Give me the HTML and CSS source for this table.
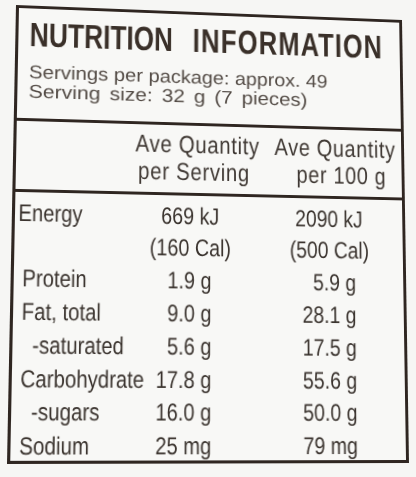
FILE: index.html
```html
<!DOCTYPE html>
<html>
<head>
    <title>Nutrition Information</title>
    <link rel="stylesheet" href="styles.css">
</head>
<body>
    <div class="label">
        <!-- Title and serving info -->
        <div class="head">
            <h1 class="title">NUTRITION <span class="wide">INFORMATION</span></h1>
            <p class="serve per-pack">Servings per package: approx. 49</p>
            <p class="serve size">Serving size: 32 g (7 pieces)</p>
        </div>

        <!-- Column headings -->
        <div class="cols">
            <div></div>
            <div class="col-head">Ave Quantity<br>per Serving</div>
            <div class="col-head">Ave Quantity<br>per 100 g</div>
        </div>

        <!-- Nutrient rows -->
        <div class="rows">
            <div class="name first">Energy</div>
            <div class="v2 mid">669 kJ</div>
            <div class="v3 mid">2090 kJ</div>

            <div class="name"></div>
            <div class="v2 mid">(160 Cal)</div>
            <div class="v3 mid">(500 Cal)</div>

            <div class="name">Protein</div>
            <div class="v2">1.9 g</div>
            <div class="v3">5.9 g</div>

            <div class="name">Fat, total</div>
            <div class="v2">9.0 g</div>
            <div class="v3">28.1 g</div>

            <div class="name sub">-saturated</div>
            <div class="v2">5.6 g</div>
            <div class="v3">17.5 g</div>

            <div class="name">Carbohydrate</div>
            <div class="v2">17.8 g</div>
            <div class="v3">55.6 g</div>

            <div class="name sub">-sugars</div>
            <div class="v2">16.0 g</div>
            <div class="v3">50.0 g</div>

            <div class="name">Sodium</div>
            <div class="v2">25 mg</div>
            <div class="v3">79 mg</div>
        </div>
    </div>
</body>
</html>
```

FILE: styles.css
```css
html, body { margin: 0; padding: 0; }
body {
    background: #f6f6f4;
    width: 416px;
    height: 477px;
    overflow: hidden;
    color: #3b332d;
    font-family: "Liberation Sans", Arial, sans-serif;
}

/* the label is photographed at a slight angle */
.label {
    width: 394px;
    height: 458px;
    box-sizing: border-box;
    border: 3px solid #2f2621;
    background: #f8f8f6;
    transform-origin: 0 0;
    transform: matrix3d(1.016453, 0.0399, 0, 0.00009144, -0.020269, 0.961226, 0, -0.00008827, 0, 0, 1, 0, 16, 5, 0, 1);
}

.title { transform: scaleX(0.75); transform-origin: 0 50%; }
.col-head, .rows { transform: scaleX(0.82); }
.per-pack { transform: scaleX(1.06); transform-origin: 0 50%; }
.size { transform: scaleX(1.1); transform-origin: 0 50%; word-spacing: 3px; }

.head {
    padding: 7px 0 18px 11px;
    border-bottom: 3px solid #2f2621;
}
.title {
    margin: 0 0 9px 0;
    width: 480px;
    font-weight: bold;
    font-size: 35px;
    line-height: 40px;
    word-spacing: 17px;
    color: #3a3029;
    white-space: nowrap;
}
.title .wide { letter-spacing: 1.6px; }
.serve {
    margin: 0;
    width: 300px;
    font-size: 19px;
    line-height: 19.6px;
    color: #524a44;
    white-space: nowrap;
}

.cols {
    display: grid;
    grid-template-columns: 1fr 140px 140px;
    padding: 5px 16px 8px 0;
    border-bottom: 3px solid #2f2621;
}
.col-head {
    text-align: right;
    font-size: 25px;
    line-height: 28px;
    letter-spacing: 0.8px;
    color: #3f3833;
    white-space: nowrap;
    transform-origin: 100% 50%;
}

.rows {
    display: grid;
    grid-template-columns: 151px 98px 171px;
    width: 460px;
    padding: 4.5px 0 0 10px;
    font-size: 24px;
    line-height: 32.8px;
    color: #3a332e;
    white-space: nowrap;
    transform-origin: 0 0;
}
.name.first { margin-left: -6px; }
.name.sub { padding-left: 13px; }
.v2 { text-align: right; padding-right: 23px; }
.v3 { text-align: right; padding-left: 73px; padding-right: 16px; }
.v2.mid, .v3.mid { text-align: center; padding-right: 0; }
```
